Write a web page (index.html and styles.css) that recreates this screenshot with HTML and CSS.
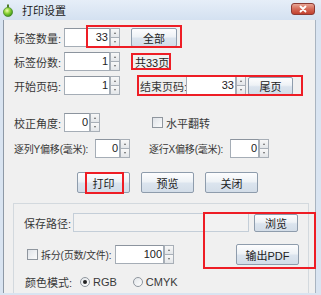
FILE: index.html
```html
<!DOCTYPE html>
<html lang="zh-CN">
<head>
    <meta charset="UTF-8">
    <meta name="viewport" content="width=device-width, initial-scale=1.0">
    <title>打印设置</title>
    <link rel="stylesheet" href="styles.css">
</head>
<body>
    <div class="titlebar">
        <svg class="app-icon" viewBox="0 0 10 13">
            <defs>
                <radialGradient id="ball" cx="0.4" cy="0.35" r="0.7">
                    <stop offset="0" stop-color="#f2ffb0"/>
                    <stop offset="0.45" stop-color="#8fd43a"/>
                    <stop offset="1" stop-color="#2f8a16"/>
                </radialGradient>
            </defs>
            <rect x="4" y="0.5" width="2" height="3" fill="#4d7a2a"/>
            <circle cx="5" cy="8" r="4.6" fill="url(#ball)" stroke="#3d7d1c" stroke-width="0.6"/>
        </svg>
        <span class="title">打印设置</span>
        <div class="close">
            <svg viewBox="0 0 24 12"><path d="M9 3 L15 9 M15 3 L9 9" stroke="#fff" stroke-width="2.2" stroke-linecap="round"/></svg>
        </div>
    </div>

    <div class="content">
        <div class="row r1">
            <span class="label">标签数量:</span>
            <div class="spin w56"><span class="spin-field">33</span><span class="spin-btns"><i class="up"></i><i class="down"></i></span></div>
            <button class="btn btn-all">全部</button>
        </div>
        <div class="row r2">
            <span class="label">标签份数:</span>
            <div class="spin w56"><span class="spin-field">1</span><span class="spin-btns"><i class="up"></i><i class="down"></i></span></div>
            <span class="total">共33页</span>
        </div>
        <div class="row r3">
            <span class="label">开始页码:</span>
            <div class="spin w56"><span class="spin-field">1</span><span class="spin-btns"><i class="up"></i><i class="down"></i></span></div>
            <span class="label end-label">结束页码:</span>
            <div class="spin w60"><span class="spin-field">33</span><span class="spin-btns"><i class="up"></i><i class="down"></i></span></div>
            <button class="btn btn-last">尾页</button>
        </div>
        <div class="row r4">
            <span class="label">校正角度:</span>
            <div class="spin w36"><span class="spin-field">0</span><span class="spin-btns"><i class="up"></i><i class="down"></i></span></div>
            <span class="check flip-check"></span>
            <span class="check-text">水平翻转</span>
        </div>
        <div class="row r5">
            <span class="label offset-label">逐列Y偏移(毫米):</span>
            <div class="spin w35"><span class="spin-field">0</span><span class="spin-btns"><i class="up"></i><i class="down"></i></span></div>
            <span class="label offset-label second">逐行X偏移(毫米):</span>
            <div class="spin w39"><span class="spin-field">0</span><span class="spin-btns"><i class="up"></i><i class="down"></i></span></div>
        </div>
        <div class="row r6">
            <button class="btn btn-main">打印</button>
            <button class="btn btn-main">预览</button>
            <button class="btn btn-main">关闭</button>
        </div>

        <div class="group">
            <div class="grow ga">
                <span class="label path-label">保存路径:</span>
                <span class="path-field"></span>
                <button class="btn btn-browse">浏览</button>
            </div>
            <div class="grow gb">
                <span class="check split-check"></span>
                <span class="split-label">拆分(页数/文件):</span>
                <div class="spin w59"><span class="spin-field">100</span><span class="spin-btns"><i class="up"></i><i class="down"></i></span></div>
                <button class="btn btn-pdf">输出PDF</button>
            </div>
            <div class="grow gc">
                <span class="label color-label">颜色模式:</span>
                <span class="radio on"></span>
                <span class="radio-text">RGB</span>
                <span class="radio second"></span>
                <span class="radio-text">CMYK</span>
            </div>
        </div>
    </div>

    <!-- 红色标注框 -->
    <div class="mark mark-1"></div>
    <div class="mark mark-2"></div>
    <div class="mark mark-3"></div>
    <div class="mark mark-4"></div>
    <div class="mark mark-5"></div>
</body>
</html>
```

FILE: styles.css
```css
body {
    margin: 0;
    width: 321px;
    height: 295px;
    overflow: hidden;
    position: relative;
    background-color: #d9e4f1;
    font-family: "Liberation Sans", "Noto Sans CJK SC", sans-serif;
    font-size: 11px;
    color: #383838;
}
.titlebar {
    height: 20px;
    display: flex;
    align-items: center;
    background: linear-gradient(#e6eef8, #d4e1f1);
}
.app-icon {
    width: 10px;
    height: 13px;
    margin-left: 3px;
}
.title {
    margin-left: 9px;
    font-size: 11px;
    color: #1b1b1b;
}
.close {
    margin-left: auto;
    margin-right: 6px;
    align-self: flex-start;
    margin-top: 3px;
    width: 24px;
    height: 12px;
    border: 1px solid #8b3a34;
    border-radius: 3px;
    box-sizing: border-box;
    background: linear-gradient(#e8a595, #d56a58 50%, #c2412f);
    display: flex;
}
.close svg {
    width: 22px;
    height: 10px;
}
.content {
    margin: 0 5px 0 3px;
    height: 273px;
    background-color: #f0f0f0;
    border-left: 1px solid #8d99a6;
    border-right: 1px solid #a9b4c0;
    padding-left: 10px;
    overflow: hidden;
}
.row {
    display: flex;
    align-items: center;
    height: 19px;
}
.r1 { margin-top: 8px; }
.r2 { margin-top: 5px; }
.r3 { margin-top: 5px; }
.r4 { margin-top: 18px; }
.r5 { margin-top: 7px; }
.r6 { margin-top: 14px; height: 21px; padding-left: 63px; }
.label {
    width: 50px;
    flex: none;
    white-space: nowrap;
}
.end-label {
    margin-left: 20px;
    width: 46px;
}
.offset-label {
    width: 81px;
    font-size: 10px;
    letter-spacing: -0.2px;
}
.offset-label.second {
    margin-left: 19px;
}

/* spinner */
.spin {
    display: flex;
    height: 19px;
    flex: none;
}
.w56 { width: 56px; }
.w60 { width: 60px; }
.w36 { width: 36px; }
.w35 { width: 35px; }
.w39 { width: 39px; }
.w59 { width: 59px; }
.spin-field {
    flex: 1;
    background-color: #fff;
    border: 1px solid #a5adb6;
    border-top-color: #8c949e;
    text-align: right;
    padding-right: 1px;
    line-height: 17px;
    color: #222;
}
.spin-btns {
    width: 10px;
    display: flex;
    flex-direction: column;
}
.spin-btns i {
    flex: 1;
    border: 1px solid #a8afb7;
    background: linear-gradient(#f8f8f8, #e3e6e9);
    display: flex;
    align-items: center;
    justify-content: center;
}
.spin-btns i.up { border-bottom: none; }
.spin-btns i::after {
    content: "";
    border-left: 1.5px solid transparent;
    border-right: 1.5px solid transparent;
}
.spin-btns i.up::after { border-bottom: 2px solid #666; }
.spin-btns i.down::after { border-top: 2px solid #666; }

/* buttons */
.btn {
    font-family: inherit;
    font-size: 11px;
    color: #222;
    padding: 0;
    border: 1px solid #8e9cac;
    border-radius: 2px;
    background: linear-gradient(#fdfdfe, #eef2f6 45%, #dbe4ee 55%, #d3dde8);
    flex: none;
}
.btn-all {
    margin-left: 11px;
    width: 46px;
    height: 19px;
}
.btn-last {
    margin-left: 2px;
    width: 45px;
    height: 18px;
}
.btn-main {
    width: 53px;
    height: 21px;
    margin-right: 11px;
}
.total {
    margin-left: 15px;
    color: #222;
}

/* checkbox / radio */
.check {
    width: 11px;
    height: 11px;
    box-sizing: border-box;
    border: 1px solid #8f969e;
    background: linear-gradient(135deg, #dfe3e8, #fbfbfb);
    flex: none;
}
.flip-check {
    margin-left: 52px;
}
.check-text {
    margin-left: 3px;
}
.radio {
    width: 10px;
    height: 10px;
    box-sizing: border-box;
    border: 1px solid #8f969e;
    border-radius: 50%;
    background: linear-gradient(135deg, #e2e6ea, #fdfdfd);
    flex: none;
    display: flex;
    align-items: center;
    justify-content: center;
}
.radio.on::after {
    content: "";
    width: 4px;
    height: 4px;
    border-radius: 50%;
    background-color: #222;
}
.radio.second {
    margin-left: 16px;
}
.radio-text {
    margin-left: 3px;
}

/* group */
.group {
    margin-top: 10px;
    margin-left: -1px;
    width: 296px;
    height: 100px;
    box-sizing: border-box;
    border: 1px solid #d3d9de;
    padding: 9px 9px 0 10px;
}
.grow {
    display: flex;
    align-items: center;
}
.ga { height: 19px; }
.gb { margin-top: 12px; height: 21px; }
.gc { margin-top: 9px; height: 16px; }
.path-label {
    width: 49px;
}
.path-field {
    width: 176px;
    height: 19px;
    box-sizing: border-box;
    border: 1px solid #c4ced8;
    background-color: #f2f2f2;
    flex: none;
}
.btn-browse {
    margin-left: 5px;
    width: 44px;
    height: 18px;
}
.split-check {
    margin-left: 3px;
}
.split-label {
    margin-left: 3px;
    width: 74px;
    white-space: nowrap;
    font-size: 10px;
    letter-spacing: -0.2px;
}
.btn-pdf {
    margin-left: auto;
    width: 63px;
    height: 21px;
}
.color-label {
    margin-left: 1px;
    width: 55px;
}

/* red annotation boxes */
.mark {
    position: absolute;
    border: 2px solid #ee1d25;
    box-sizing: border-box;
}
.mark-1 { left: 86px; top: 25px; width: 96px; height: 23px; }
.mark-2 { left: 131px; top: 53px; width: 40px; height: 17px; }
.mark-3 { left: 137px; top: 75px; width: 166px; height: 21px; }
.mark-4 { left: 85px; top: 172px; width: 39px; height: 22px; }
.mark-5 { left: 203px; top: 212px; width: 113px; height: 57px; }
```
